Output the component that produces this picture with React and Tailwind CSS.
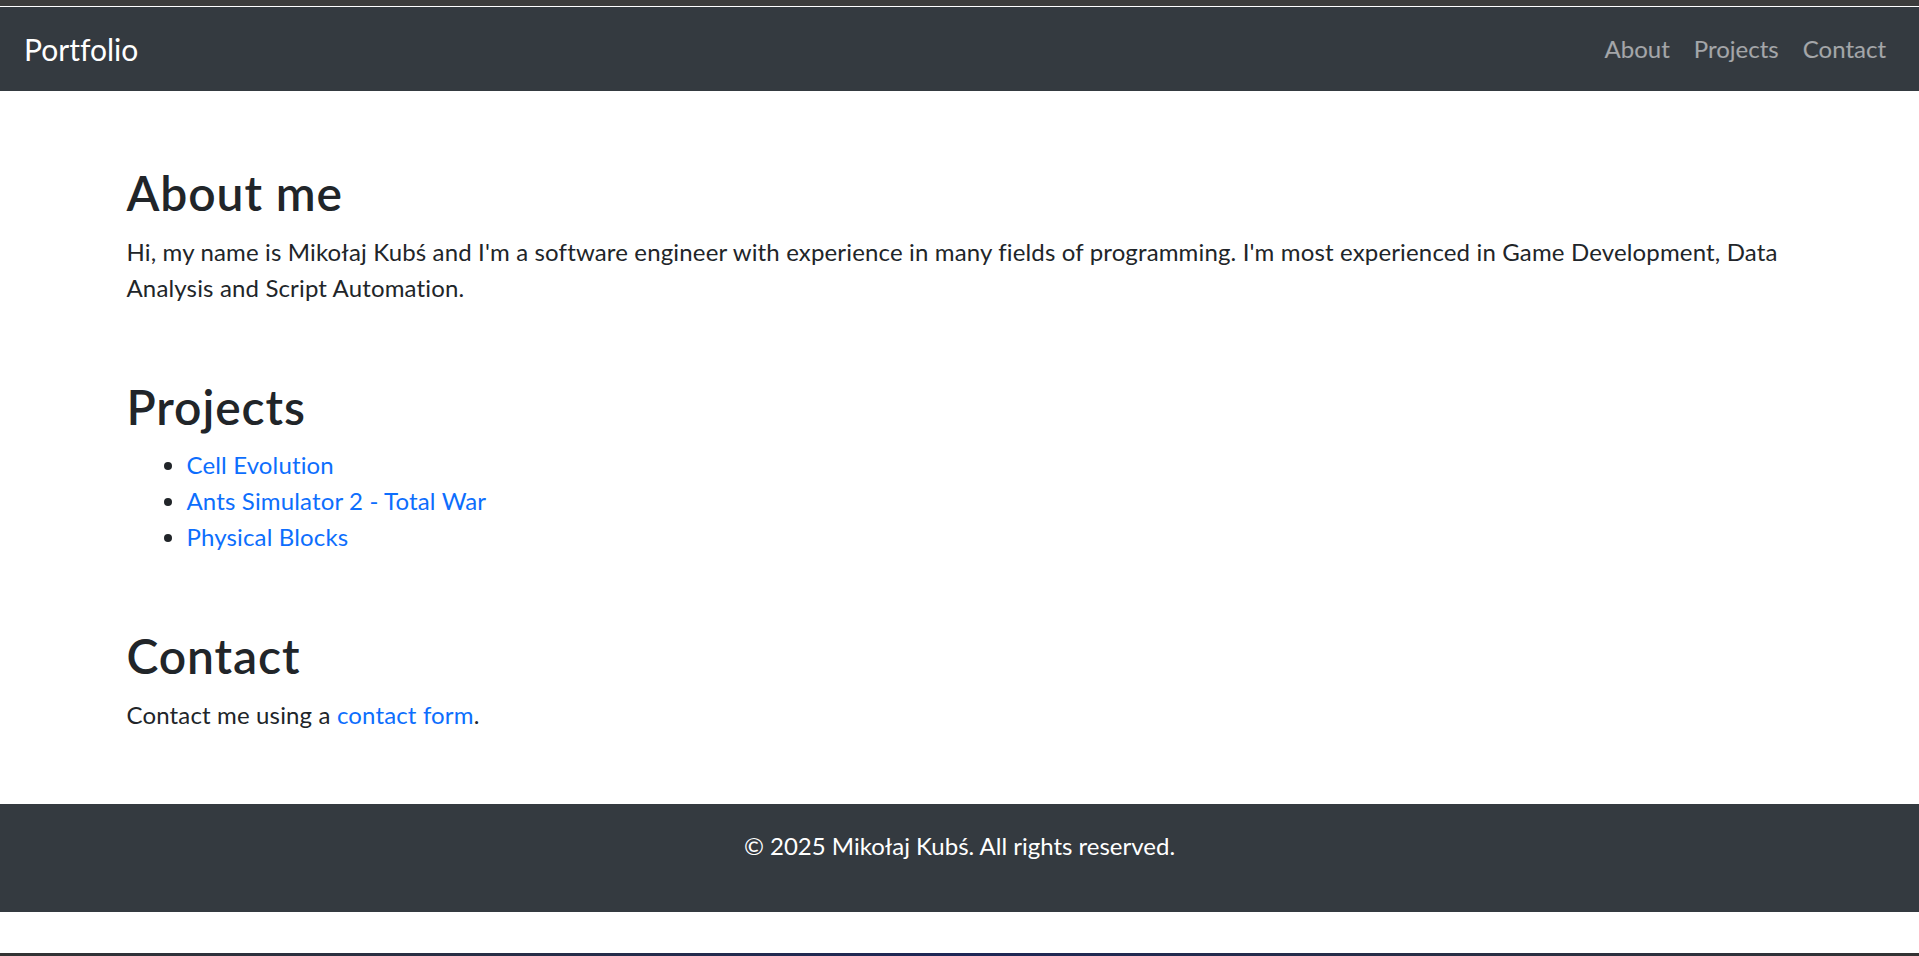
import React from 'react';

const links = ['About', 'Projects', 'Contact'];
const projects = ['Cell Evolution', 'Ants Simulator 2 - Total War', 'Physical Blocks'];

const App = () => {
    return (
        <div className="h-screen flex flex-col bg-white text-[#212529] font-['Lato',sans-serif] [font-variant-ligatures:none]">
            <div className="h-[6px] bg-[#3c3c3c]" />
            <div className="h-px bg-white" />
            <nav className="h-[84px] bg-[#343a40] flex items-center justify-between pl-[24px] pr-[21px]">
                <a href="#" className="text-[30px] leading-[45px] text-white">Portfolio</a>
                <ul className="flex">
                    {links.map((link) => (
                        <li key={link}>
                            <a href={`#${link.toLowerCase()}`} className="block px-[12px] text-[24px] leading-[36px] text-white/55 hover:text-white/75">
                                {link}
                            </a>
                        </li>
                    ))}
                </ul>
            </nav>

            <main className="max-w-[1710px] w-full mx-auto px-[22px] pt-[73px] text-[24px] leading-[36px] tracking-[0.15px]">
                <section id="about" className="mb-[72px]">
                    <h2 className="text-[48px] leading-[57.6px] font-semibold tracking-[0.9px] mb-[12px]">About me</h2>
                    <p>
                        Hi, my name is Mikołaj Kubś and I'm a software engineer with experience in many fields of programming. I'm most experienced in Game Development, Data Analysis and Script Automation.
                    </p>
                </section>

                <section id="projects" className="mb-[72px]">
                    <h2 className="text-[48px] leading-[57.6px] font-semibold tracking-[0.9px] mb-[12px]">Projects</h2>
                    <ul className="list-disc pl-[60px]">
                        {projects.map((p) => (
                            <li key={p}>
                                <a href="#" className="text-[#0d6efd] hover:underline">{p}</a>
                            </li>
                        ))}
                    </ul>
                </section>

                <section id="contact" className="mb-[71px]">
                    <h2 className="text-[48px] leading-[57.6px] font-semibold tracking-[0.9px] mb-[12px]">Contact</h2>
                    <p>
                        Contact me using a <a href="#" className="text-[#0d6efd] hover:underline">contact form</a>.
                    </p>
                </section>
            </main>

            <footer className="bg-[#343a40] py-[24px] text-center text-white">
                <p className="text-[24px] leading-[36px] mb-[24px]">© 2025 Mikołaj Kubś. All rights reserved.</p>
            </footer>

            <div className="flex-1" />
            <div className="h-[3px] bg-gradient-to-r from-[#333333] via-[#1e2656] to-[#333333]" />
        </div>
    );
};

export default App;
